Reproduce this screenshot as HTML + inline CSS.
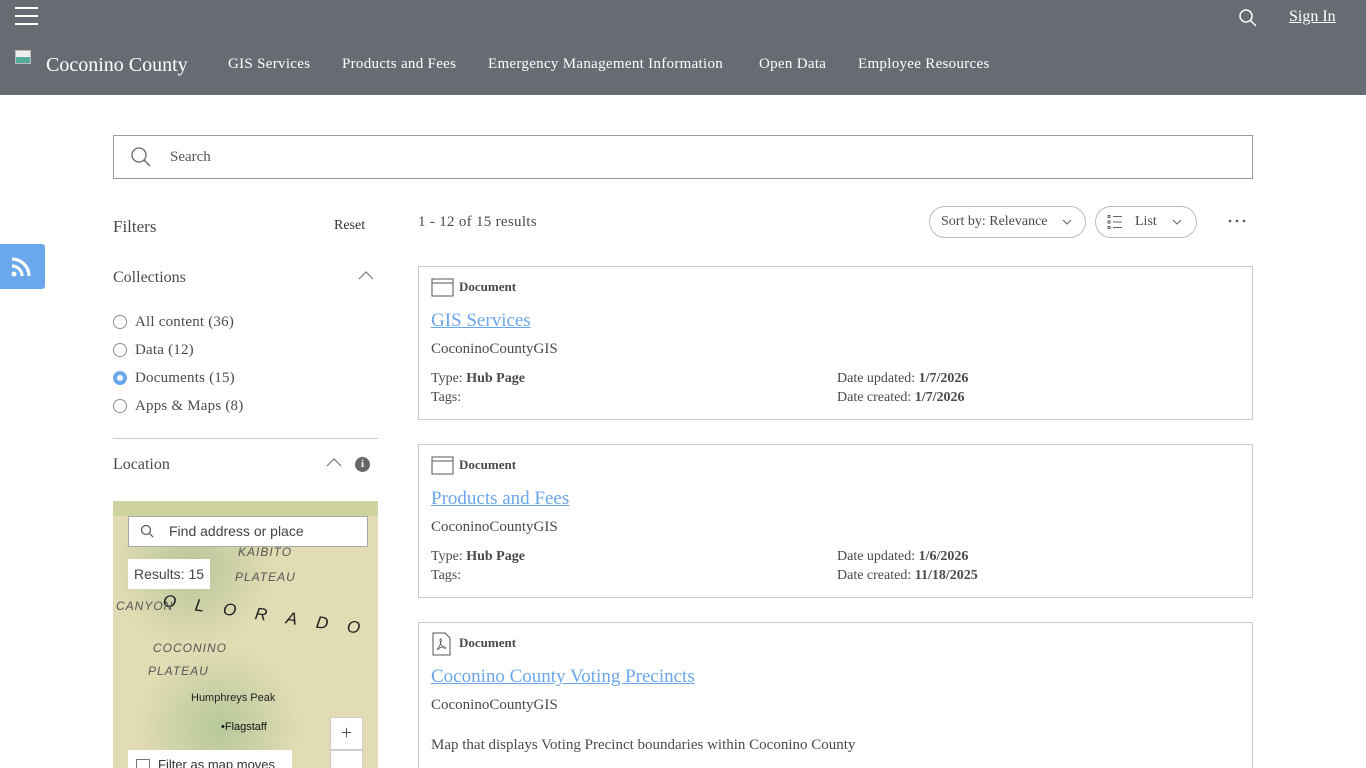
<!DOCTYPE html>
<html><head><meta charset="utf-8"><style>
*{box-sizing:border-box;margin:0;padding:0}
html{width:1366px;height:768px;overflow:hidden}
body{width:1366px;height:768px;overflow:hidden;background:#fff;font-family:"Liberation Serif",serif;color:#4a4a4a;position:relative}
.a{position:absolute;white-space:nowrap}
.hdr{position:absolute;left:0;top:0;width:1366px;height:95px;background:#676c72}
.nav{color:#fff;font-size:15px;top:56px;letter-spacing:.3px}
.card{position:absolute;left:418px;width:835px;border:1px solid #c9c9c9;background:#fff}
.lnk{color:#6aa7ec;text-decoration:underline;font-size:19px}
.radio{position:absolute;width:14px;height:14px;border:1px solid #8a8a8a;border-radius:50%;left:113px}
</style></head><body>
<div class="hdr"></div>
<div class="a" style="left:15px;top:7px;width:23px;height:2px;background:#fff;box-shadow:0 8px 0 #fff,0 16px 0 #fff"></div>
<svg class="a" style="left:1238px;top:8px" width="20" height="20" viewBox="0 0 20 20"><circle cx="8" cy="8" r="6" fill="none" stroke="#fff" stroke-width="1.5"/><line x1="12.5" y1="12.5" x2="18" y2="18" stroke="#fff" stroke-width="1.5"/></svg>
<div class="a" style="left:1289px;top:8px;color:#fff;font-size:16px;text-decoration:underline">Sign In</div>
<div class="a" style="left:15px;top:50px;width:16px;height:14px;background:linear-gradient(#eee 50%,#5a9 50%);border:1px solid #bbb"></div>
<div class="a" style="left:46px;top:54px;color:#fff;font-size:20px">Coconino County</div>
<div class="a nav" style="left:228px">GIS Services</div>
<div class="a nav" style="left:342px">Products and Fees</div>
<div class="a nav" style="left:488px">Emergency Management Information</div>
<div class="a nav" style="left:759px">Open Data</div>
<div class="a nav" style="left:858px">Employee Resources</div>

<div class="a" style="left:113px;top:135px;width:1140px;height:44px;border:1px solid #9a9a9a"></div>
<svg class="a" style="left:130px;top:146px" width="22" height="22" viewBox="0 0 22 22"><circle cx="9" cy="9" r="7" fill="none" stroke="#666" stroke-width="1.3"/><line x1="14" y1="14" x2="20" y2="20" stroke="#666" stroke-width="1.3"/></svg>
<div class="a" style="left:170px;top:149px;font-size:15px;color:#555">Search</div>

<div class="a" style="left:0;top:244px;width:45px;height:45px;background:#6aa7ec;border-radius:0 3px 3px 0"></div>
<svg class="a" style="left:10px;top:256px" width="22" height="22" viewBox="0 0 22 22"><circle cx="4" cy="18" r="2.5" fill="#fff"/><path d="M2 10a10 10 0 0 1 10 10M2 3a17 17 0 0 1 17 17" fill="none" stroke="#fff" stroke-width="3.2"/></svg>

<div class="a" style="left:113px;top:217px;font-size:17px">Filters</div>
<div class="a" style="left:334px;top:218px;font-size:14px;color:#333">Reset</div>
<div class="a" style="left:113px;top:269px;font-size:16px">Collections</div>
<svg class="a" style="left:358px;top:271px" width="16" height="10" viewBox="0 0 16 10"><path d="M1 8l7-7 7 7" fill="none" stroke="#777" stroke-width="1.2"/></svg>
<div class="radio" style="top:315px"></div><div class="a" style="left:135px;top:314px;font-size:15px;letter-spacing:.2px">All content (36)</div>
<div class="radio" style="top:343px"></div><div class="a" style="left:135px;top:342px;font-size:15px;letter-spacing:.2px">Data (12)</div>
<div class="radio" style="top:371px;border:4px solid #6aa7ec;background:#fff"></div><div class="a" style="left:135px;top:370px;font-size:15px;letter-spacing:.2px">Documents (15)</div>
<div class="radio" style="top:399px"></div><div class="a" style="left:135px;top:398px;font-size:15px;letter-spacing:.2px">Apps &amp; Maps (8)</div>
<div class="a" style="left:113px;top:438px;width:265px;height:1px;background:#ccc"></div>
<div class="a" style="left:113px;top:456px;font-size:16px">Location</div>
<svg class="a" style="left:326px;top:458px" width="16" height="10" viewBox="0 0 16 10"><path d="M1 8l7-7 7 7" fill="none" stroke="#777" stroke-width="1.2"/></svg>
<div class="a" style="left:355px;top:457px;width:15px;height:15px;border-radius:50%;background:#666;color:#fff;font-size:11px;text-align:center;line-height:15px;font-weight:bold">i</div>

<div class="a" style="left:113px;top:501px;width:265px;height:267px;background:radial-gradient(circle at 30% 25%,#b9c69a,transparent 30%),radial-gradient(circle at 40% 85%,#b7c89a,transparent 30%),#e2dcb4;overflow:hidden">
<div class="a" style="left:0;top:0;width:265px;height:15px;background:#cfd3a0"></div>
<div class="a" style="left:15px;top:15px;width:240px;height:31px;background:#fff;border:1px solid #aaa"></div>
<svg class="a" style="left:27px;top:23px" width="14" height="14" viewBox="0 0 14 14"><circle cx="6" cy="6" r="4.5" fill="none" stroke="#555" stroke-width="1.2"/><line x1="9.5" y1="9.5" x2="13" y2="13" stroke="#555" stroke-width="1.2"/></svg>
<div class="a" style="left:56px;top:22px;font-family:'Liberation Sans',sans-serif;font-size:14px;color:#444">Find address or place</div>
<div class="a" style="left:15px;top:58px;width:82px;height:30px;background:#fff"></div>
<div class="a" style="left:21px;top:65px;font-family:'Liberation Sans',sans-serif;font-size:14px;color:#444">Results: 15</div>
<div class="a" style="left:125px;top:44px;font-family:'Liberation Sans',sans-serif;font-size:12px;font-style:italic;color:#555;letter-spacing:1px">KAIBITO</div>
<div class="a" style="left:122px;top:69px;font-family:'Liberation Sans',sans-serif;font-size:12px;font-style:italic;color:#555;letter-spacing:1px">PLATEAU</div>
<div class="a" style="left:50px;top:90px;font-family:'Liberation Sans',sans-serif;font-size:17px;font-style:italic;color:#222;letter-spacing:19px;transform:rotate(8deg);transform-origin:left">OLORADO</div>
<div class="a" style="left:3px;top:98px;font-family:'Liberation Sans',sans-serif;font-size:12px;font-style:italic;color:#555;letter-spacing:1px">CANYON</div>
<div class="a" style="left:40px;top:140px;font-family:'Liberation Sans',sans-serif;font-size:12px;font-style:italic;color:#555;letter-spacing:1px">COCONINO</div>
<div class="a" style="left:35px;top:163px;font-family:'Liberation Sans',sans-serif;font-size:12px;font-style:italic;color:#555;letter-spacing:1px">PLATEAU</div>
<div class="a" style="left:78px;top:191px;font-family:'Liberation Sans',sans-serif;font-size:11px;color:#222">Humphreys Peak</div>
<div class="a" style="left:108px;top:220px;font-family:'Liberation Sans',sans-serif;font-size:11px;color:#111">•Flagstaff</div>
<div class="a" style="left:217px;top:216px;width:33px;height:33px;background:#fff;border:1px solid #ccc;text-align:center;font-size:20px;line-height:30px;color:#555">+</div>
<div class="a" style="left:217px;top:249px;width:33px;height:33px;background:#fff;border:1px solid #ccc"></div>
<div class="a" style="left:15px;top:249px;width:164px;height:30px;background:#fff"></div>
<div class="a" style="left:23px;top:258px;width:14px;height:14px;border:1px solid #777"></div>
<div class="a" style="left:45px;top:256px;font-family:'Liberation Sans',sans-serif;font-size:13px;color:#333">Filter as map moves</div>
</div>

<div class="a" style="left:418px;top:214px;font-size:15px;letter-spacing:.3px">1 - 12 of 15 results</div>
<div class="a" style="left:929px;top:206px;width:157px;height:32px;border:1px solid #bbb;border-radius:16px"></div>
<div class="a" style="left:941px;top:214px;font-size:14px">Sort by: Relevance</div>
<svg class="a" style="left:1062px;top:219px" width="10" height="6"><path d="M1 1l4 4 4-4" fill="none" stroke="#666"/></svg>
<div class="a" style="left:1095px;top:206px;width:102px;height:32px;border:1px solid #bbb;border-radius:16px"></div>
<svg class="a" style="left:1107px;top:214px" width="16" height="16" viewBox="0 0 16 16"><g stroke="#666" fill="none"><rect x="1" y="1.5" width="2" height="2"/><rect x="1" y="7" width="2" height="2"/><rect x="1" y="12.5" width="2" height="2"/><path d="M6 2.5h9M6 8h9M6 13.5h9"/></g></svg>
<div class="a" style="left:1135px;top:214px;font-size:14px">List</div>
<svg class="a" style="left:1172px;top:219px" width="10" height="6"><path d="M1 1l4 4 4-4" fill="none" stroke="#666"/></svg>
<svg class="a" style="left:1228px;top:219px" width="18" height="4"><circle cx="2" cy="2" r="1.3" fill="#555"/><circle cx="9" cy="2" r="1.3" fill="#555"/><circle cx="16" cy="2" r="1.3" fill="#555"/></svg>

<div class="card" style="top:266px;height:154px">
<svg class="a" style="left:12px;top:11px" width="24" height="20"><rect x="1" y="1" width="21" height="17" fill="none" stroke="#555"/><line x1="1" y1="5" x2="22" y2="5" stroke="#555"/></svg>
<div class="a" style="left:40px;top:12px;font-size:13px;font-weight:bold">Document</div>
<div class="a lnk" style="left:12px;top:43px">GIS Services</div>
<div class="a" style="left:12px;top:74px;font-size:15px">CoconinoCountyGIS</div>
<div class="a" style="left:12px;top:104px;font-size:14px">Type: <b>Hub Page</b></div>
<div class="a" style="left:12px;top:123px;font-size:14px">Tags:</div>
<div class="a" style="left:418px;top:104px;font-size:14px">Date updated: <b>1/7/2026</b></div>
<div class="a" style="left:418px;top:123px;font-size:14px">Date created: <b>1/7/2026</b></div>
</div>
<div class="card" style="top:444px;height:154px">
<svg class="a" style="left:12px;top:11px" width="24" height="20"><rect x="1" y="1" width="21" height="17" fill="none" stroke="#555"/><line x1="1" y1="5" x2="22" y2="5" stroke="#555"/></svg>
<div class="a" style="left:40px;top:12px;font-size:13px;font-weight:bold">Document</div>
<div class="a lnk" style="left:12px;top:43px">Products and Fees</div>
<div class="a" style="left:12px;top:74px;font-size:15px">CoconinoCountyGIS</div>
<div class="a" style="left:12px;top:104px;font-size:14px">Type: <b>Hub Page</b></div>
<div class="a" style="left:12px;top:123px;font-size:14px">Tags:</div>
<div class="a" style="left:418px;top:104px;font-size:14px">Date updated: <b>1/6/2026</b></div>
<div class="a" style="left:418px;top:123px;font-size:14px">Date created: <b>11/18/2025</b></div>
</div>
<div class="card" style="top:622px;height:146px;border-bottom:none">
<svg class="a" style="left:13px;top:9px" width="20" height="24"><path d="M1 1h12l5 5v17H1z" fill="none" stroke="#555"/><path d="M5 18c3-4 5-9 4-11s-2 3 1 7 5 2 3 1-6 1-8 3" fill="none" stroke="#555" stroke-width=".8"/></svg>
<div class="a" style="left:40px;top:12px;font-size:13px;font-weight:bold">Document</div>
<div class="a lnk" style="left:12px;top:43px">Coconino County Voting Precincts</div>
<div class="a" style="left:12px;top:74px;font-size:15px">CoconinoCountyGIS</div>
<div class="a" style="left:12px;top:114px;font-size:15px">Map that displays Voting Precinct boundaries within Coconino County</div>
</div>
</body></html>
